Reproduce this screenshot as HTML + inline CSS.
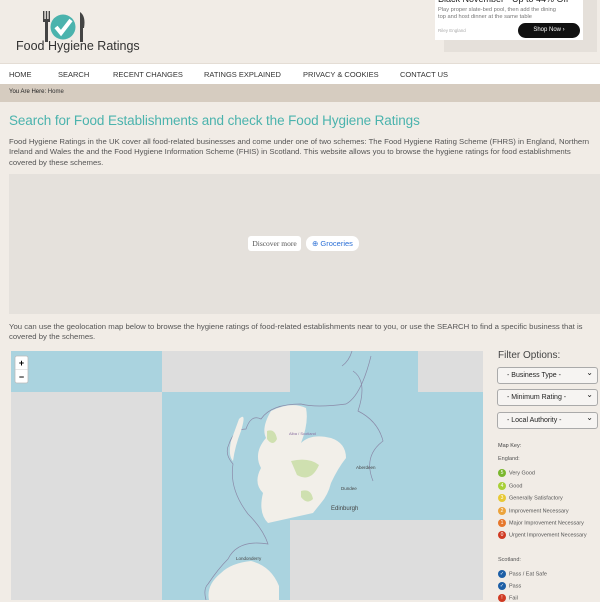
<!DOCTYPE html>
<html><head><meta charset="utf-8"><style>
*{margin:0;padding:0;box-sizing:border-box}
body{width:600px;height:600px;overflow:hidden;background:#f1ece6;font-family:"Liberation Sans",sans-serif;position:relative;color:#555}
.abs{position:absolute}
.nav{top:63px;left:0;width:600px;height:21px;background:#fff;border-top:1px solid #e4ddd5}
.nav span{position:absolute;top:6px;font-size:7.5px;color:#333}
.bc{top:84px;left:0;width:600px;height:18px;background:#d6ccc0;font-size:6px;color:#333;padding:5px 9px}
h1{position:absolute;left:9px;top:113px;font-size:13.5px;font-weight:normal;color:#4bb3ad;letter-spacing:-.1px}
p.t{position:absolute;left:9px;font-size:7.75px;line-height:10.3px;color:#555}
.sel{position:absolute;left:497px;width:101px;height:17px;border:1px solid #aaa;border-radius:3px;background:#f6f4f2;font-size:7px;color:#222;padding:4px 0 0 9px}
.sel:after{content:"⌄";position:absolute;right:4px;top:0px;font-size:8px}
.k{position:absolute;left:498px;font-size:5.5px;color:#555}
.k i{display:inline-block;width:8px;height:8px;border-radius:50%;vertical-align:middle;margin-right:3px;color:#fff;font-style:normal;font-size:5px;text-align:center;line-height:8px}
</style></head><body>
<!-- logo -->
<svg class="abs" style="left:40px;top:9px" width="50" height="34" viewBox="0 0 50 34">
<rect x="3" y="2" width="1.4" height="9" fill="#444"/><rect x="5.8" y="2" width="1.4" height="9" fill="#444"/><rect x="8.6" y="2" width="1.4" height="9" fill="#444"/>
<rect x="3" y="10" width="7" height="3" fill="#444"/><rect x="5" y="12" width="3" height="21" fill="#444"/>
<circle cx="23" cy="18" r="12.5" fill="#4bb3ad"/>
<path d="M16 18 l5 6 l10 -13" stroke="#fff" stroke-width="4" fill="none"/>
<path d="M40 3 q6 4 4 16 l-1 0 l0 14 l-3 0z" fill="#444"/>
</svg>
<div class="abs" style="left:16px;top:39px;font-size:12.5px;color:#333">Food Hygiene Ratings</div>
<!-- ad -->
<div class="abs" style="left:444px;top:0;width:153px;height:52px;background:#e5e0da"></div>
<div class="abs" style="left:435px;top:0;width:148px;height:40px;background:#fff"></div>
<div class="abs" style="left:438px;top:-6px;font-size:9px;color:#222;white-space:nowrap">Black November - Up to 44% Off</div>
<div class="abs" style="left:438px;top:7px;font-size:5.7px;color:#777;line-height:7px">Play proper slate-bed pool, then add the dining<br>top and host dinner at the same table</div>
<div class="abs" style="left:438px;top:28px;font-size:4.5px;color:#aaa">Riley England</div>
<div class="abs" style="left:518px;top:23px;width:62px;height:15px;border-radius:8px;background:#111;color:#fff;font-size:6px;text-align:center;line-height:15px">Shop Now ›</div>
<div class="abs nav"><span style="left:9px">HOME</span><span style="left:58px">SEARCH</span><span style="left:113px">RECENT CHANGES</span><span style="left:204px">RATINGS EXPLAINED</span><span style="left:303px">PRIVACY &amp; COOKIES</span><span style="left:400px">CONTACT US</span></div>
<div class="abs bc"><span style="color:#222">You Are Here:</span> Home</div>
<h1>Search for Food Establishments and check the Food Hygiene Ratings</h1>
<p class="t" style="top:137px;width:590px">Food Hygiene Ratings in the UK cover all food-related businesses and come under one of two schemes: The Food Hygiene Rating Scheme (FHRS) in England, Northern Ireland and Wales the and the Food Hygiene Information Scheme (FHIS) in Scotland. This website allows you to browse the hygiene ratings for food establishments covered by these schemes.</p>
<div class="abs" style="left:9px;top:174px;width:591px;height:140px;background:#e5e1dc"></div>
<div class="abs" style="left:248px;top:236px;width:53px;height:15px;background:#fff;border-radius:3px;font-family:'Liberation Serif',serif;font-size:7.5px;color:#555;text-align:center;line-height:15px">Discover more</div>
<div class="abs" style="left:306px;top:236px;width:53px;height:15px;background:#fff;border-radius:7px;font-size:7.5px;color:#2a6fd6;text-align:center;line-height:15px">⊕ Groceries</div>
<p class="t" style="top:322px;width:590px">You can use the geolocation map below to browse the hygiene ratings of food-related establishments near to you, or use the SEARCH to find a specific business that is covered by the schemes.</p>
<!-- map -->
<svg class="abs" style="left:11px;top:351px" width="472" height="249" viewBox="0 0 472 249">
<rect width="472" height="249" fill="#dddddd"/>
<rect x="0" y="0" width="151" height="41" fill="#aad3df"/>
<rect x="279" y="0" width="128" height="41" fill="#aad3df"/>
<rect x="151" y="41" width="321" height="128" fill="#aad3df"/>
<rect x="151" y="169" width="128" height="80" fill="#aad3df"/>
<path d="M360 5 q-10 40 -25 48 q-30 4 -45 0 q-30 0 -40 15 q-10 -5 -15 10 q-12 0 -17 15 q-5 10 4 20 q-4 25 15 50 q15 15 20 30 q-30 -5 -40 15 q-10 10 -20 25 q-5 5 -2 16" stroke="#8a8aa8" stroke-width=".7" fill="none"/>
<path d="M362 130 q-10 -25 10 -40 q-5 -20 -25 -30 q10 -30 -5 -40 M341 0 q-3 10 -10 15" stroke="#8a8aa8" stroke-width=".7" fill="none"/>
<path d="M260 60 q20 -10 35 -3 q3 15 -5 35 q10 -10 30 -5 q15 5 15 20 q-8 10 -15 25 q-3 12 -10 20 l-8 10 l-45 10 q-10 -10 -5 -30 q-10 -10 -2 -25 q-8 -15 5 -30 q-5 -10 5 -27z" fill="#f2efe9"/>
<path d="M228 68 q8 -8 2 12 q-6 15 -8 30 q-5 -5 -2 -20z" fill="#f2efe9"/>
<path d="M210 222 q10 -10 30 -12 q20 5 28 25 l0 14 l-70 0 q-3 -15 12 -27z" fill="#f2efe9"/>
<path d="M256 80 q8 -3 10 8 q-4 8 -10 0z M280 110 q18 -4 28 4 q-8 18 -22 10z M290 140 q10 -3 12 8 q-6 6 -12 -2z" fill="#cfe0b0"/>
<text x="278" y="84" font-size="4" fill="#8a6fa0" font-family="Liberation Sans">Alba / Scotland</text>
<text x="345" y="118" font-size="4.5" fill="#444" font-family="Liberation Sans">Aberdeen</text>
<text x="330" y="139" font-size="4.5" fill="#444" font-family="Liberation Sans">Dundee</text>
<text x="320" y="159" font-size="6" fill="#444" font-family="Liberation Sans">Edinburgh</text>
<text x="225" y="209" font-size="4.5" fill="#444" font-family="Liberation Sans">Londonderry</text>
<rect x="279" y="169" width="193" height="80" fill="#dddddd"/>
<rect x="4" y="5" width="13" height="27" rx="2" fill="#fff" stroke="#bbb" stroke-width=".8"/>
<line x1="4" y1="18.5" x2="17" y2="18.5" stroke="#ccc" stroke-width=".5"/>
<text x="10.5" y="15" font-size="9" text-anchor="middle" fill="#000" font-weight="bold" font-family="Liberation Sans">+</text>
<text x="10.5" y="29" font-size="9" text-anchor="middle" fill="#000" font-weight="bold" font-family="Liberation Sans">−</text>
</svg>
<!-- filters -->
<div class="abs" style="left:498px;top:350px;font-size:10px;color:#444">Filter Options:</div>
<div class="sel" style="top:367px">- Business Type -</div>
<div class="sel" style="top:389px">- Minimum Rating -</div>
<div class="sel" style="top:412px">- Local Authority -</div>
<div class="k" style="top:443px;color:#444">Map Key:</div>
<div class="k" style="top:456px">England:</div>
<div class="k" style="top:469px"><i style="background:#7ab72e">5</i>Very Good</div>
<div class="k" style="top:482px"><i style="background:#a8d037">4</i>Good</div>
<div class="k" style="top:494px"><i style="background:#e8c934">3</i>Generally Satisfactory</div>
<div class="k" style="top:507px"><i style="background:#eca33b">2</i>Improvement Necessary</div>
<div class="k" style="top:519px"><i style="background:#e6772c">1</i>Major Improvement Necessary</div>
<div class="k" style="top:531px"><i style="background:#d03a23">0</i>Urgent Improvement Necessary</div>
<div class="k" style="top:557px">Scotland:</div>
<div class="k" style="top:570px"><i style="background:#1d5fa6">✓</i>Pass / Eat Safe</div>
<div class="k" style="top:582px"><i style="background:#1d5fa6">✓</i>Pass</div>
<div class="k" style="top:594px"><i style="background:#d03a23">!</i>Fail</div>
</body></html>
